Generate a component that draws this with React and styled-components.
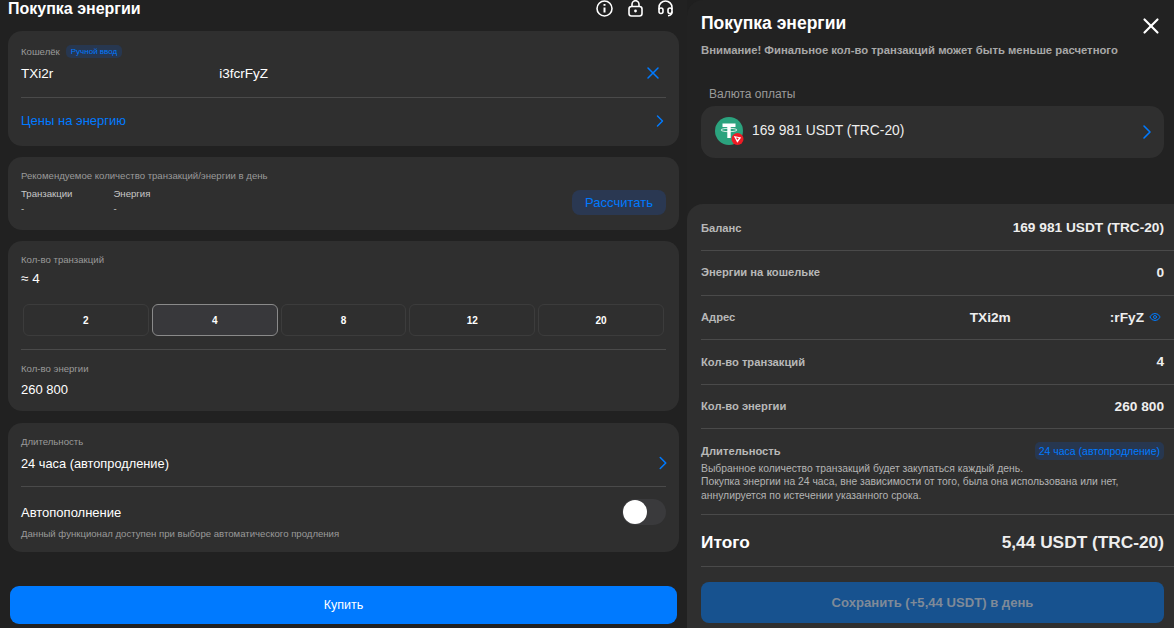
import React from "react";
import styled, { createGlobalStyle } from "styled-components";
import { ChevronRight, Eye, X } from "lucide-react";

const blue = "#007aff";
const cardBg = "#2f2f2f";
const line = "#4a4a4a";
const muted = "#9a9a9a";

const GlobalStyle = createGlobalStyle`
  html, body, #root { height: 100%; margin: 0; }
  body {
    background: #1f1f1f;
    color: #fff;
    font-family: "Liberation Sans", Arial, sans-serif;
    overflow: hidden;
  }
  * { box-sizing: border-box; }
`;

const Root = styled.div`
  display: flex;
  width: 1174px;
  height: 628px;
  overflow: hidden;
`;

const Left = styled.main`
  width: 687px;
  flex-shrink: 0;
  padding: 0 8px;
  display: flex;
  flex-direction: column;
  background: #212121;
`;

const Header = styled.header`
  height: 31px;
  display: flex;
  justify-content: space-between;
  padding-right: 6px;
`;

const Title = styled.h1`
  margin: 0;
  font-size: ${p => p.$size || 16}px;
  line-height: 17px;
  font-weight: 700;
`;

const HeaderIcons = styled.div`
  display: flex;
  gap: 15px;
  height: 17px;
  color: #fff;
`;

const Card = styled.section`
  background: ${cardBg};
  border-radius: 14px;
  padding: 14px 13px 0;
  height: ${p => p.$h}px;
  margin-bottom: ${p => p.$mb || 11}px;
`;

const Label = styled.div`
  font-size: 9.6px;
  line-height: 10px;
  margin-top: ${p => p.$mt || 0}px;
  color: ${muted};
`;

const LabelRow = styled.div`
  display: flex;
  align-items: center;
  gap: 6px;
  height: 13px;
`;

const Badge = styled.span`
  background: #273750;
  color: ${blue};
  border-radius: 5px;
  font-size: ${p => p.$size || 8}px;
  font-weight: 400;
  line-height: 12px;
  padding: ${p => p.$pad || "0.5px 5px"};
`;

const ValueRow = styled.div`
  display: flex;
  align-items: center;
  justify-content: space-between;
  height: ${p => p.$h || 20}px;
  margin-top: ${p => p.$mt || 0}px;
  font-size: ${p => p.$size || 13}px;
  color: ${p => p.$color || "#fff"};
`;

const Masked = styled.span`
  display: inline-flex;
  align-items: center;
`;

const MaskGap = styled.span`
  width: ${p => p.$w}px;
`;

const Divider = styled.div`
  height: 1px;
  background: ${line};
  margin-top: ${p => p.$mt || 0}px;
`;

const Chevron = styled(ChevronRight)`
  color: ${blue};
  flex-shrink: 0;
  margin-right: ${p => p.$mr || 0}px;
`;

const ClearIcon = styled(X)`
  color: ${blue};
  margin-right: 3px;
`;

const CloseIcon = styled(X)`
  color: #fff;
  margin: 5px 1px 0 0;
`;

const EyeIcon = styled(Eye)`
  color: ${blue};
  margin: 0 3px 0 1px;
`;

const Stats = styled.div`
  display: flex;
  gap: 41px;
  margin-top: 5px;
  font-size: 9.6px;
  line-height: 15px;
  color: #c8c8c8;
`;

const CalcRow = styled.div`
  display: flex;
  justify-content: space-between;
  align-items: flex-start;
`;

const SoftButton = styled.button`
  width: 94px;
  height: 25px;
  margin-top: 19px;
  border: 0;
  border-radius: 8px;
  background: #2a3852;
  color: ${blue};
  font: 13px "Liberation Sans", Arial, sans-serif;
`;

const Options = styled.div`
  display: grid;
  grid-template-columns: repeat(5, 125.8px);
  gap: 3px;
  margin: 17px 0 0 2px;
`;

const Option = styled.button`
  height: 32px;
  border-radius: 6px;
  border: 1px solid ${p => (p.$active ? "#8a8a8a" : "#3c3c3c")};
  background: ${p => (p.$active ? "#38383b" : "transparent")};
  color: #fff;
  font: 700 10px "Liberation Sans", Arial, sans-serif;
`;

const ToggleRow = styled.div`
  display: flex;
  justify-content: space-between;
  align-items: center;
  height: 26px;
  margin-top: 12px;
  font-size: 13px;
`;

const Toggle = styled.div`
  width: 44px;
  height: 26px;
  border-radius: 13px;
  background: #3a3a3c;
  display: flex;
  align-items: center;
  padding-left: 1px;
`;

const Knob = styled.span`
  width: 24px;
  height: 24px;
  border-radius: 50%;
  background: #fff;
`;

const Spacer = styled.div`
  flex: 1;
`;

const PrimaryButton = styled.button`
  height: 38px;
  margin: 0 2px 4px;
  border: 0;
  border-radius: 9px;
  background: ${blue};
  color: #fff;
  font: 12.5px "Liberation Sans", Arial, sans-serif;
`;

const Right = styled.aside`
  flex: 1;
  display: flex;
  flex-direction: column;
  background: #222;
  border-radius: 16px 0 0 0;
`;

const RightHead = styled.div`
  padding: 14px 9px 0 14px;
  height: 87px;
`;

const RightTitleRow = styled.div`
  display: flex;
  justify-content: space-between;
  align-items: center;
  height: 19px;
`;

const Notice = styled.p`
  margin: 11px 0 0;
  font-size: 11.3px;
  line-height: 12px;
  font-weight: 700;
  color: #a8a8a8;
  white-space: nowrap;
`;

const CurrencyBlock = styled.div`
  padding: 0 10px 0 14px;
  height: 117px;
`;

const CurrencyLabel = styled.div`
  font-size: 12px;
  line-height: 14px;
  color: ${muted};
  padding-left: 8px;
  margin-bottom: 5px;
`;

const CurrencyCard = styled.div`
  height: 52px;
  border-radius: 14px;
  background: ${cardBg};
  display: flex;
  align-items: center;
  gap: 7px;
  padding: 0 5px 0 14px;
  font-size: 13.8px;
  color: #eee;
`;

const CurrencyName = styled.span`
  flex: 1;
  margin-bottom: 3px;
`;

const Summary = styled.div`
  flex: 1;
  background: ${cardBg};
  border-radius: 16px 0 0 0;
  padding: 3px 0 0 14px;
`;

const Row = styled.div`
  display: flex;
  justify-content: space-between;
  align-items: center;
  height: ${p => p.$h || 44.4}px;
  padding: ${p => p.$pad || "0 10px 2px 0"};
  border-bottom: 1px solid ${line};
  font-size: ${p => p.$size || 11.2}px;
  font-weight: 700;
  color: ${p => p.$color || "#b8b8b8"};
`;

const RowValue = styled.span`
  display: inline-flex;
  align-items: center;
  gap: 4px;
  font-size: ${p => p.$size || 13.7}px;
  color: #eee;
`;

const DurationBlock = styled.div`
  height: 86px;
  padding: 15px 10px 0 0;
  border-bottom: 1px solid ${line};
`;

const DurationHead = styled.div`
  display: flex;
  justify-content: space-between;
  align-items: center;
  height: 18px;
  margin-top: -2px;
  font-size: 11.2px;
  font-weight: 700;
  color: #b8b8b8;
`;

const DurationText = styled.p`
  margin: 2px 0 0;
  font-size: 10.35px;
  line-height: 13.5px;
  color: #b4b4b4;
  white-space: nowrap;
`;

const SaveButton = styled.button`
  display: block;
  width: 463px;
  height: 41px;
  margin-top: 15px;
  border: 0;
  border-radius: 8px;
  background: #17528f;
  color: #7f8a98;
  font: 700 13.1px "Liberation Sans", Arial, sans-serif;
`;

function InfoIcon() {
  return (
    <svg width="17" height="17" viewBox="0 0 17 17" fill="none" stroke="#fff" strokeWidth="1.6">
      <circle cx="8.5" cy="8.5" r="7.5" />
      <path d="M8.5 7.5v5" strokeWidth="2" />
      <path d="M8.5 4v1.8" strokeWidth="2" />
    </svg>
  );
}

function LockIcon() {
  return (
    <svg width="15" height="17" viewBox="0 0 15 17" fill="none" stroke="#fff" strokeWidth="1.6">
      <rect x="1" y="6.5" width="13" height="9.500" rx="2.500" />
      <path d="M4 6.500V4.200a3.500 3.500 0 0 1 7 0v2.300" />
      <circle cx="7.500" cy="11" r="1.400" fill="#fff" stroke="none" />
    </svg>
  );
}

function SupportIcon() {
  return (
    <svg width="15" height="17" viewBox="0 0 15 17" fill="none" stroke="#fff" strokeWidth="1.6">
      <path d="M1 9.500V7.500a6.500 6.500 0 0 1 13 0v2" />
      <rect x="1" y="8" width="4" height="5.500" rx="2" />
      <rect x="10" y="8" width="4" height="5.500" rx="2" />
      <path d="M14 11.500c0 2.800-1.500 4-4 4.300" />
    </svg>
  );
}

function TetherIcon() {
  return (
    <svg width="30" height="30" viewBox="0 0 30 30">
      <circle cx="14" cy="14" r="14" fill="#2ba37e" />
      <path d="M7.500 6.500h13v3.500h-4.800v11h-3.400V10H7.500z" fill="#fff" />
      <ellipse cx="14" cy="13" rx="8" ry="1.700" fill="none" stroke="#fff" strokeWidth="0.800" />
      <circle cx="22.500" cy="22" r="6" fill="#ee1c25" />
      <path d="M18.800 19l7.400 1.400-3.900 5.400z" fill="#fff" />
      <path d="M21 20.500l1.300 2.400 1.600-1.800z" fill="#ee1c25" />
    </svg>
  );
}

export default function App() {
  return (
    <Root>
      <GlobalStyle />
      <Left>
        <Header>
          <Title>Покупка энергии</Title>
          <HeaderIcons>
            <InfoIcon />
            <LockIcon />
            <SupportIcon />
          </HeaderIcons>
        </Header>

        <Card $h={115}>
          <LabelRow>
            <Label>Кошелёк</Label>
            <Badge>Ручной ввод</Badge>
          </LabelRow>
          <ValueRow $mt={5} $size={13.5}>
            <Masked>
              <span>TXi2r</span>
              <MaskGap $w={166} />
              <span>i3fcrFyZ</span>
            </Masked>
            <ClearIcon size={20} strokeWidth={1.8} />
          </ValueRow>
          <Divider $mt={14} />
          <ValueRow $h={45} $color={blue}>
            Цены на энергию
            <Chevron size={20} strokeWidth={1.7} $mr={-4} />
          </ValueRow>
        </Card>

        <Card $h={73}>
          <CalcRow>
            <div>
              <Label>Рекомендуемое количество транзакций/энергии в день</Label>
              <Stats>
                <div>Транзакции<br />-</div>
                <div>Энергия<br />-</div>
              </Stats>
            </div>
            <SoftButton>Рассчитать</SoftButton>
          </CalcRow>
        </Card>

        <Card $h={170} $mb={12}>
          <Label>Кол-во транзакций</Label>
          <ValueRow $mt={5} $h={17} $size={13.5}>≈ 4</ValueRow>
          <Options>
            {[2, 4, 8, 12, 20].map(n => (
              <Option key={n} $active={n === 4}>{n}</Option>
            ))}
          </Options>
          <Divider $mt={13} />
          <Label $mt={14}>Кол-во энергии</Label>
          <ValueRow $mt={6} $h={19}>260 800</ValueRow>
        </Card>

        <Card $h={129} $mb={1}>
          <Label>Длительность</Label>
          <ValueRow $mt={6} $size={12.8}>
            24 часа (автопродление)
            <Chevron size={22} strokeWidth={1.7} $mr={-8} />
          </ValueRow>
          <Divider $mt={13} />
          <ToggleRow>
            Автопополнение
            <Toggle><Knob /></Toggle>
          </ToggleRow>
          <Label $mt={4}>Данный функционал доступен при выборе автоматического продления</Label>
        </Card>

        <Spacer />
        <PrimaryButton>Купить</PrimaryButton>
      </Left>

      <Right>
        <RightHead>
          <RightTitleRow>
            <Title $size={17.5}>Покупка энергии</Title>
            <CloseIcon size={26} strokeWidth={2} />
          </RightTitleRow>
          <Notice>Внимание! Финальное кол-во транзакций может быть меньше расчетного</Notice>
        </RightHead>

        <CurrencyBlock>
          <CurrencyLabel>Валюта оплаты</CurrencyLabel>
          <CurrencyCard>
            <TetherIcon />
            <CurrencyName>169 981 USDT (TRC-20)</CurrencyName>
            <Chevron size={24} strokeWidth={1.6} />
          </CurrencyCard>
        </CurrencyBlock>

        <Summary>
          <Row>Баланс<RowValue>169 981 USDT (TRC-20)</RowValue></Row>
          <Row>Энергии на кошельке<RowValue>0</RowValue></Row>
          <Row $pad="0 10px 0 0">
            Адрес
            <RowValue>
              <span>TXi2m</span>
              <MaskGap $w={91} />
              <span>:rFyZ</span>
              <EyeIcon size={12} />
            </RowValue>
          </Row>
          <Row $pad="0 10px 0 0">Кол-во транзакций<RowValue>4</RowValue></Row>
          <Row $pad="0 10px 0 0">Кол-во энергии<RowValue>260 800</RowValue></Row>
          <DurationBlock>
            <DurationHead>
              Длительность
              <Badge $size={10.5} $pad="3px 4px">24 часа (автопродление)</Badge>
            </DurationHead>
            <DurationText>
              Выбранное количество транзакций будет закупаться каждый день.<br />
              Покупка энергии на 24 часа, вне зависимости от того, была она использована или нет,<br />
              аннулируется по истечении указанного срока.
            </DurationText>
          </DurationBlock>
          <Row $h={52} $size={17.3} $color="#fff" $pad="4px 10px 0 0">
            Итого
            <RowValue $size={17.3}>5,44 USDT (TRC-20)</RowValue>
          </Row>
          <SaveButton>Сохранить (+5,44 USDT) в день</SaveButton>
        </Summary>
      </Right>
    </Root>
  );
}
